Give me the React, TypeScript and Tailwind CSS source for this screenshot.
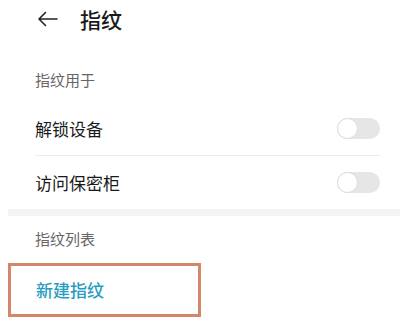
import React from "react"

const font = { fontFamily: '"Noto Sans CJK SC", "Noto Sans", sans-serif' }

function Toggle() {
  return (
    <div className="relative w-[43px] h-[21px] rounded-full bg-[#e6e6e6]">
      <div className="absolute left-0 top-0 w-[21px] h-[21px] rounded-full bg-white border-[1.5px] border-[#dcdcdc]" />
    </div>
  )
}

export default function App() {
  return (
    <div className="w-[400px] h-[327px] bg-white overflow-hidden text-[#1a1a1a]" style={font}>
      {/* header */}
      <div className="flex items-center h-[38px] pl-[37px]">
        <svg width="21" height="16" viewBox="0 0 21 16" fill="none" stroke="#222" strokeWidth="1.6" strokeLinecap="round" strokeLinejoin="round">
          <path d="M20 8H2M8.5 1.5L2 8l6.5 6.5" />
        </svg>
        <span className="ml-[22px] text-[21px] font-medium leading-none">指纹</span>
      </div>

      <div className="pl-[35px] pt-[33px] text-[15px] leading-[18px] text-[#666]">指纹用于</div>

      <div className="mt-[13px] pl-[35px] pr-[20px]">
        <div className="flex items-center justify-between h-[54px] border-b border-[#ececec]">
          <span className="text-[17px]">解锁设备</span>
          <Toggle />
        </div>
        <div className="flex items-center justify-between h-[53px]">
          <span className="text-[17px]">访问保密柜</span>
          <Toggle />
        </div>
      </div>

      <div className="ml-[8px] h-[7px] bg-[#f4f4f4]" />

      <div className="pl-[35px] pt-[14px] text-[15px] leading-[18px] text-[#666]">指纹列表</div>

      <div className="mt-[15px] ml-[8px] w-[193px] h-[54px] border-[3px] border-[#d4856a] flex items-center pl-[25px]">
        <span className="text-[17px] font-medium text-[#2a9cc2]">新建指纹</span>
      </div>
    </div>
  )
}
